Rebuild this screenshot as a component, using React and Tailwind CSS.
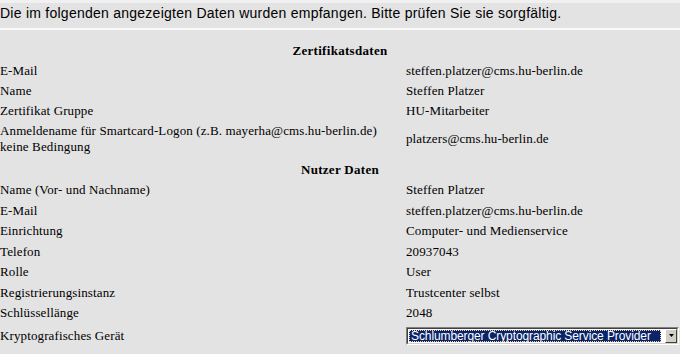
import React from "react";

const serif = { fontFamily: '"Liberation Serif", "Times New Roman", serif' };

function Row({ label, value, h = "h-[20px]" }) {
  return (
    <tr className={h}>
      <td className="w-[406px] p-0 align-middle leading-[16px]">{label}</td>
      <td className="p-0 align-middle leading-[16px]">{value}</td>
    </tr>
  );
}

function Header({ children }) {
  return (
    <tr className="h-[23px]">
      <td colSpan={2} className="p-0 pt-[5px] text-center align-top font-bold leading-[16px] tracking-[0.3px]">
        {children}
      </td>
    </tr>
  );
}

function ClassicSelect() {
  return (
    <div className="flex h-[18px] w-[273px] border-t border-l border-[#808080] border-r border-b border-r-white border-b-white">
      <div className="flex flex-1 border-t border-l border-[#404040] border-r border-b border-r-[#d4d0c8] border-b-[#d4d0c8] bg-white">
        <div className="flex flex-1 items-center p-[1px]">
          <div
            className="flex h-full flex-1 items-center whitespace-nowrap bg-[#0a246a] pl-[2px] text-[12px] leading-[14px] tracking-[-0.1px] text-white outline-1 outline-dotted outline-offset-[-1px] outline-[#f5d5a0]"
            style={{ fontFamily: '"Liberation Sans", Arial, sans-serif' }}
          >
            Schlumberger Cryptographic Service Provider
          </div>
        </div>
        <div className="ml-[3px] flex w-[12px] items-center justify-center border-t border-l border-white border-r border-b border-r-[#404040] border-b-[#404040] bg-[#d4d0c8]">
          <svg width="5" height="3" viewBox="0 0 5 3">
            <path d="M0 0h5L2.5 3z" fill="#000" />
          </svg>
        </div>
      </div>
    </div>
  );
}

export default function App() {
  return (
    <div className="h-[354px] w-[680px] overflow-hidden bg-[#e3e3e3] text-black">
      <div
        className="h-[28px] border-t-[3px] border-[#f1f1f1] pt-[2px] text-[14px] leading-[16px] tracking-[0.25px]"
        style={{ fontFamily: '"Liberation Sans", Arial, sans-serif' }}
      >
        Die im folgenden angezeigten Daten wurden empfangen. Bitte prüfen Sie sie sorgfältig.
      </div>
      <div className="h-[2px] bg-[#fafafa]" />
      <div className="pt-[8px] text-[13px] tracking-[0.12px]" style={serif}>
        <table className="w-full border-collapse">
          <tbody>
            <Header>Zertifikatsdaten</Header>
            <Row label="E-Mail" value="steffen.platzer@cms.hu-berlin.de" />
            <Row label="Name" value="Steffen Platzer" />
            <Row label="Zertifikat Gruppe" value="HU-Mitarbeiter" />
            <Row
              h="h-[36px]"
              label={
                <>
                  Anmeldename für Smartcard-Logon (z.B. mayerha@cms.hu-berlin.de)
                  <br />
                  keine Bedingung
                </>
              }
              value="platzers@cms.hu-berlin.de"
            />
            <Header>Nutzer Daten</Header>
            <Row h="h-[20.5px]" label="Name (Vor- und Nachname)" value="Steffen Platzer" />
            <Row h="h-[20.5px]" label="E-Mail" value="steffen.platzer@cms.hu-berlin.de" />
            <Row h="h-[20.5px]" label="Einrichtung" value="Computer- und Medienservice" />
            <Row h="h-[20.5px]" label="Telefon" value="20937043" />
            <Row h="h-[20.5px]" label="Rolle" value="User" />
            <Row h="h-[20.5px]" label="Registrierungsinstanz" value="Trustcenter selbst" />
            <Row h="h-[20.5px]" label="Schlüssellänge" value="2048" />
            <Row h="h-[24px]" label="Kryptografisches Gerät" value={<ClassicSelect />} />
          </tbody>
        </table>
      </div>
    </div>
  );
}
